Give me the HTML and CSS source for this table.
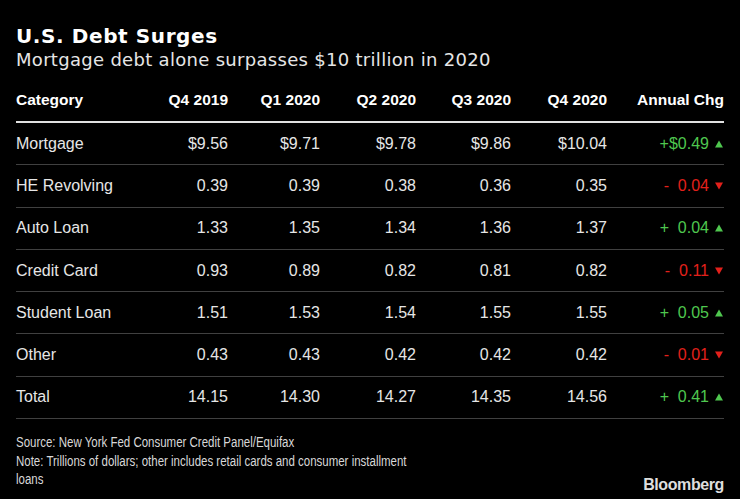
FILE: index.html
```html
<!DOCTYPE html>
<html>
<head>
<meta charset="utf-8">
<link rel="stylesheet" href="styles.css">
</head>
<body>
<div class="page">
  <header class="heading">
    <h1 class="title">U.S. Debt Surges</h1>
    <p class="subtitle">Mortgage debt alone surpasses $10 trillion in 2020</p>
  </header>
  <div class="table">
    <div class="row head">
      <div class="cell cat">Category</div>
      <div class="cell num">Q4 2019</div>
      <div class="cell num">Q1 2020</div>
      <div class="cell num">Q2 2020</div>
      <div class="cell num">Q3 2020</div>
      <div class="cell num">Q4 2020</div>
      <div class="cell chg">Annual Chg</div>
    </div>
    <div class="row">
      <div class="cell cat">Mortgage</div>
      <div class="cell num">$9.56</div>
      <div class="cell num">$9.71</div>
      <div class="cell num">$9.78</div>
      <div class="cell num">$9.86</div>
      <div class="cell num">$10.04</div>
      <div class="cell chg up"><span>+$0.49</span><svg class="arrow" viewBox="0 0 8 8"><polygon points="4,0.5 8,7.5 0,7.5"/></svg></div>
    </div>
    <div class="row">
      <div class="cell cat">HE Revolving</div>
      <div class="cell num">0.39</div>
      <div class="cell num">0.39</div>
      <div class="cell num">0.38</div>
      <div class="cell num">0.36</div>
      <div class="cell num">0.35</div>
      <div class="cell chg down"><span>-&nbsp;&nbsp;0.04</span><svg class="arrow" viewBox="0 0 8 8"><polygon points="0,0.5 8,0.5 4,7.5"/></svg></div>
    </div>
    <div class="row">
      <div class="cell cat">Auto Loan</div>
      <div class="cell num">1.33</div>
      <div class="cell num">1.35</div>
      <div class="cell num">1.34</div>
      <div class="cell num">1.36</div>
      <div class="cell num">1.37</div>
      <div class="cell chg up"><span>+&nbsp;&nbsp;0.04</span><svg class="arrow" viewBox="0 0 8 8"><polygon points="4,0.5 8,7.5 0,7.5"/></svg></div>
    </div>
    <div class="row">
      <div class="cell cat">Credit Card</div>
      <div class="cell num">0.93</div>
      <div class="cell num">0.89</div>
      <div class="cell num">0.82</div>
      <div class="cell num">0.81</div>
      <div class="cell num">0.82</div>
      <div class="cell chg down"><span>-&nbsp;&nbsp;0.11</span><svg class="arrow" viewBox="0 0 8 8"><polygon points="0,0.5 8,0.5 4,7.5"/></svg></div>
    </div>
    <div class="row">
      <div class="cell cat">Student Loan</div>
      <div class="cell num">1.51</div>
      <div class="cell num">1.53</div>
      <div class="cell num">1.54</div>
      <div class="cell num">1.55</div>
      <div class="cell num">1.55</div>
      <div class="cell chg up"><span>+&nbsp;&nbsp;0.05</span><svg class="arrow" viewBox="0 0 8 8"><polygon points="4,0.5 8,7.5 0,7.5"/></svg></div>
    </div>
    <div class="row">
      <div class="cell cat">Other</div>
      <div class="cell num">0.43</div>
      <div class="cell num">0.43</div>
      <div class="cell num">0.42</div>
      <div class="cell num">0.42</div>
      <div class="cell num">0.42</div>
      <div class="cell chg down"><span>-&nbsp;&nbsp;0.01</span><svg class="arrow" viewBox="0 0 8 8"><polygon points="0,0.5 8,0.5 4,7.5"/></svg></div>
    </div>
    <div class="row">
      <div class="cell cat">Total</div>
      <div class="cell num">14.15</div>
      <div class="cell num">14.30</div>
      <div class="cell num">14.27</div>
      <div class="cell num">14.35</div>
      <div class="cell num">14.56</div>
      <div class="cell chg up"><span>+&nbsp;&nbsp;0.41</span><svg class="arrow" viewBox="0 0 8 8"><polygon points="4,0.5 8,7.5 0,7.5"/></svg></div>
    </div>
  </div>
  <footer class="footer">
    <div class="notes">
      <p>Source: New York Fed Consumer Credit Panel/Equifax</p>
      <p>Note: Trillions of dollars; other includes retail cards and consumer installment loans</p>
    </div>
    <div class="logo">Bloomberg</div>
  </footer>
</div>
</body>
</html>
```
FILE: styles.css
```css
* { box-sizing: border-box; }
html, body {
  margin: 0;
  padding: 0;
  background: #000;
}
.page {
  width: 740px;
  height: 499px;
  padding: 0 16px;
  color: #e6e6e6;
  font-family: "Liberation Sans", Arial, sans-serif;
  overflow: hidden;
}
.heading {
  padding-top: 24px;
}
.title {
  margin: 0;
  font-family: "DejaVu Sans", sans-serif;
  font-weight: bold;
  font-size: 20px;
  line-height: 25px;
  color: #fff;
  letter-spacing: 0.6px;
}
.subtitle {
  margin: 0;
  font-family: "DejaVu Sans", sans-serif;
  font-size: 18px;
  line-height: 22px;
  letter-spacing: 0.3px;
  color: #e6e6e6;
}
.table {
  margin-top: 8px;
  width: 708px;
}
.row {
  display: grid;
  grid-template-columns: 120px 92px 92px 96px 95px 96px 117px;
  align-items: center;
  height: 42.3px;
  border-bottom: 1px solid #404040;
  font-size: 16px;
}
.row.head {
  height: 44px;
  border-bottom: 2px solid #e0e0e0;
  font-weight: bold;
  font-size: 15.5px;
  color: #fff;
}
.cell.num, .cell.chg {
  text-align: right;
}
.cell.chg {
  display: flex;
  justify-content: flex-end;
  align-items: center;
  white-space: pre;
}
.up { color: #4fc74f; }
.down { color: #e3201b; }
.arrow {
  width: 8px;
  height: 8px;
  margin-left: 6px;
  margin-right: 1px;
  fill: currentColor;
}
.row.head .cell.chg { display: block; }
.footer {
  display: flex;
  justify-content: space-between;
  align-items: flex-end;
  padding-top: 14px;
  width: 708px;
}
.notes {
  width: 490px;
  transform: scaleX(0.82);
  transform-origin: left top;
  font-size: 14px;
  line-height: 18.5px;
  color: #d8d8d8;
}
.notes p { margin: 0; }
.logo {
  font-weight: bold;
  font-size: 16px;
  letter-spacing: -0.4px;
  color: #dedede;
  margin-bottom: -5px;
}
```
